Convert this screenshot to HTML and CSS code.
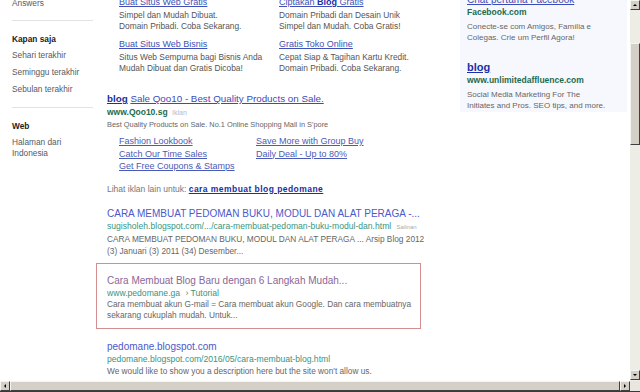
FILE: index.html
```html
<!DOCTYPE html>
<html>
<head>
<meta charset="utf-8">
<link rel="stylesheet" href="styles.css">
</head>
<body>
<div class="window">
  <div class="viewport">
    <div class="page">
      <aside class="left">
        <div class="ltop">Answers</div>
        <div class="rule"></div>
        <div class="lhead">Kapan saja</div>
        <div class="litem">Sehari terakhir</div>
        <div class="litem">Seminggu terakhir</div>
        <div class="litem">Sebulan terakhir</div>
        <div class="rule r2"></div>
        <div class="lhead">Web</div>
        <div class="lsub">Halaman dari<br>Indonesia</div>
      </aside>
      <main class="main">
        <div class="sitegrid">
          <div class="sl">
            <a class="sllink">Buat Situs Web Gratis</a>
            <div class="sldesc">Simpel dan Mudah Dibuat.<br>Domain Pribadi. Coba Sekarang.</div>
          </div>
          <div class="sl">
            <a class="sllink">Ciptakan <b>Blog</b> Gratis</a>
            <div class="sldesc">Domain Pribadi dan Desain Unik<br>Simpel dan Mudah. Coba Gratis!</div>
          </div>
          <div class="sl sl2">
            <a class="sllink">Buat Situs Web Bisnis</a>
            <div class="sldesc">Situs Web Sempurna bagi Bisnis Anda<br>Mudah Dibuat dan Gratis Dicoba!</div>
          </div>
          <div class="sl sl2">
            <a class="sllink">Gratis Toko Online</a>
            <div class="sldesc">Cepat Siap &amp; Tagihan Kartu Kredit.<br>Domain Pribadi. Coba Sekarang.</div>
          </div>
        </div>

        <div class="ad">
          <div class="adtitle"><b class="kw">blog</b> <span class="u">Sale Qoo10 - Best Quality Products on Sale.</span></div>
          <div class="adurl"><b>www.Qoo10.sg</b> <span class="iklan">Iklan</span></div>
          <div class="addesc">Best Quality Products on Sale. No.1 Online Shopping Mall in S'pore</div>
          <div class="adlinks">
            <a>Fashion Lookbook</a><a>Save More with Group Buy</a>
            <a>Catch Our Time Sales</a><a>Daily Deal - Up to 80%</a>
            <a>Get Free Coupons &amp; Stamps</a>
          </div>
          <div class="more">Lihat iklan lain untuk: <a>cara membuat blog pedomane</a></div>
        </div>

        <div class="res r1">
          <div class="rtitle">CARA MEMBUAT PEDOMAN BUKU, MODUL DAN ALAT PERAGA -...</div>
          <div class="rurl">sugisholeh.blogspot.com/.../cara-membuat-pedoman-buku-modul-dan.html <span class="salin">Salinan</span></div>
          <div class="rdesc">CARA MEMBUAT PEDOMAN BUKU, MODUL DAN ALAT PERAGA ... Arsip Blog 2012<br>(3) Januari (3) 2011 (34) Desember...</div>
        </div>

        <div class="res boxed">
          <div class="rtitle visited">Cara Membuat Blog Baru dengan 6 Langkah Mudah...</div>
          <div class="rurl">www.pedomane.ga <span class="crumb">› Tutorial</span></div>
          <div class="rdesc">Cara membuat akun G-mail = Cara membuat akun Google. Dan cara membuatnya<br>sekarang cukuplah mudah. Untuk...</div>
        </div>

        <div class="res r3">
          <div class="rtitle">pedomane.blogspot.com</div>
          <div class="rurl">pedomane.blogspot.com/2016/05/cara-membuat-blog.html</div>
          <div class="rdesc">We would like to show you a description here but the site won't allow us.</div>
        </div>
      </main>
      <aside class="right">
        <div class="rpanel">
          <a class="rplink">Chat pertama Facebook</a>
          <div class="rpurl">Facebook.com</div>
          <div class="rpdesc">Conecte-se com Amigos, Família e<br>Colegas. Crie um Perfil Agora!</div>
          <a class="rptitle">blog</a>
          <div class="rpurl">www.unlimitedaffluence.com</div>
          <div class="rpdesc">Social Media Marketing For The<br>Initiates and Pros. SEO tips, and more.</div>
        </div>
      </aside>
    </div>
    <div class="vscroll">
      <div class="btn up"><span class="tri-up"></span></div>
      <div class="vtrack">
        <div class="vthumb"></div>
      </div>
      <div class="btn down"><span class="tri-down"></span></div>
    </div>
  </div>
  <div class="hscroll">
    <div class="btn hb"><span class="tri-left"></span></div>
    <div class="hthumb"></div>
    <div class="btn hb"><span class="tri-right"></span></div>
    <div class="corner"></div>
  </div>
</div>
</body>
</html>
```

FILE: styles.css
```css
html, body {
  margin: 0;
  padding: 0;
  background: #fff;
}
body {
  font-family: "Liberation Sans", Arial, sans-serif;
  width: 640px;
  height: 392px;
  overflow: hidden;
}
a { cursor: pointer; }
.window {
  width: 640px;
  height: 392px;
  display: flex;
  flex-direction: column;
}
.viewport {
  flex: 1;
  display: flex;
  overflow: hidden;
}
.page {
  width: 630px;
  display: flex;
  overflow: hidden;
}

/* left column */
.left {
  width: 84px;
  padding-left: 12px;
  flex: none;
  font-size: 8.3px;
  color: #555a66;
}
.ltop {
  line-height: 12px;
  margin-top: -3px;
}
.rule {
  height: 1px;
  background: #e3e3e3;
  margin-top: 11px;
  width: 81px;
}
.r2 { margin-top: 9px; }
.lhead {
  font-weight: bold;
  color: #222;
  line-height: 14px;
  margin-top: 11px;
}
.litem {
  line-height: 17px;
}
.lhead + .litem { margin-top: 1px; }
.lsub {
  line-height: 11px;
  margin-top: 4px;
}

/* main column */
.main {
  width: 353px;
  flex: none;
  padding-left: 11px;
}
.sitegrid {
  display: grid;
  grid-template-columns: 160px 170px;
  margin-top: -4px;
  padding-left: 12px;
}
.sl2 { margin-top: 7px; }
.sllink {
  display: block;
  font-size: 9px;
  line-height: 12px;
  color: #4050b5;
  text-decoration: underline;
}
.sllink b { color: #1a2fa8; }
.sldesc {
  font-size: 8.4px;
  line-height: 10.5px;
  color: #555;
  margin-top: 2px;
}

.ad { margin-top: 19px; }
.adtitle {
  font-size: 9.8px;
  line-height: 14px;
  color: #3b4bb8;
  white-space: nowrap;
}
.adtitle .kw {
  color: #1a2fa0;
  text-decoration: underline;
}
.adtitle .u { text-decoration: underline; }
.adurl {
  font-size: 8.5px;
  line-height: 13px;
  color: #1d6b50;
}
.iklan {
  font-size: 7px;
  color: #b8b8c8;
  margin-left: 2px;
}
.addesc {
  font-size: 7.4px;
  line-height: 12px;
  color: #666;
  white-space: nowrap;
}
.adlinks {
  display: grid;
  grid-template-columns: 137px auto;
  padding-left: 12px;
  margin-top: 4px;
  font-size: 9px;
  line-height: 12.5px;
}
.adlinks a {
  color: #4a5ab8;
  text-decoration: underline;
}
.more {
  margin-top: 10px;
  font-size: 8.5px;
  line-height: 12px;
  color: #777;
}
.more a {
  color: #1a2fa0;
  font-weight: bold;
  text-decoration: underline;
  letter-spacing: 0.45px;
}

.res { white-space: nowrap; }
.r1 { margin-top: 12px; }
.rtitle {
  font-size: 10px;
  line-height: 14px;
  color: #4d59c8;
}
.rtitle.visited { color: #8a6797; }
.rurl {
  font-size: 8.6px;
  line-height: 11px;
  color: #3a9480;
}
.salin {
  font-size: 6px;
  color: #aaa;
  margin-left: 3px;
}
.crumb { margin-left: 3px; }
.rdesc {
  font-size: 8.3px;
  line-height: 12px;
  color: #666;
}
.boxed {
  margin-top: 6px;
  margin-left: -11px;
  width: 313px;
  border: 1px solid #d38f8f;
  padding: 10px 0 7px 10px;
}
.boxed .rdesc { line-height: 11px; }
.r3 { margin-top: 11px; }

/* right column */
.right {
  flex: none;
}
.rpanel {
  width: 160px;
  background: #f7f8fe;
  padding: 0 0 1px 7px;
  margin-top: -6px;
}
.rplink {
  display: block;
  font-size: 10px;
  line-height: 12px;
  color: #3b4bb8;
  text-decoration: underline;
}
.rpurl {
  font-size: 8.5px;
  line-height: 13px;
  font-weight: bold;
  color: #1d6b50;
}
.rpdesc {
  font-size: 8px;
  line-height: 11px;
  color: #666;
  margin-top: 2px;
}
.rptitle {
  display: block;
  margin-top: 17px;
  font-size: 11px;
  line-height: 14px;
  font-weight: bold;
  color: #1a2fa8;
  text-decoration: underline;
}

/* scrollbars */
.vscroll {
  width: 10px;
  flex: none;
  display: flex;
  flex-direction: column;
  background: #eeede5;
}
.btn {
  width: 10px;
  height: 10px;
  flex: none;
  background: #d4d0c8;
  box-sizing: border-box;
  border-top: 1px solid #f4f4f0;
  border-left: 1px solid #f4f4f0;
  border-right: 1px solid #404040;
  border-bottom: 1px solid #404040;
  display: flex;
  align-items: center;
  justify-content: center;
}
.vtrack {
  flex: 1;
  padding-top: 33px;
}
.vthumb {
  height: 102px;
  background: #d4d0c8;
  box-sizing: border-box;
  border-top: 1px solid #f4f4f0;
  border-left: 1px solid #f4f4f0;
  border-right: 1px solid #404040;
  border-bottom: 1px solid #404040;
}
.down { margin-bottom: 1px; }
.tri-up, .tri-down, .tri-left, .tri-right {
  width: 0;
  height: 0;
  border: 2px solid transparent;
}
.tri-up { border-bottom: 2px solid #000; border-top: 0; }
.tri-down { border-top: 2px solid #000; border-bottom: 0; }
.tri-left { border-right: 2px solid #000; border-left: 0; }
.tri-right { border-left: 2px solid #000; border-right: 0; }

.hscroll {
  height: 11px;
  flex: none;
  display: flex;
  background: #eeede5;
  border-bottom: 1px solid #3a3a3a;
  box-sizing: border-box;
}
.hb { height: 10px; }
.hthumb {
  flex: 1;
  height: 10px;
  background: #d4d0c8;
  box-sizing: border-box;
  border-top: 1px solid #f4f4f0;
  border-left: 1px solid #f4f4f0;
  border-right: 1px solid #404040;
  border-bottom: 1px solid #404040;
}
.corner {
  width: 10px;
  height: 10px;
  background: #e8e6de;
}
```
